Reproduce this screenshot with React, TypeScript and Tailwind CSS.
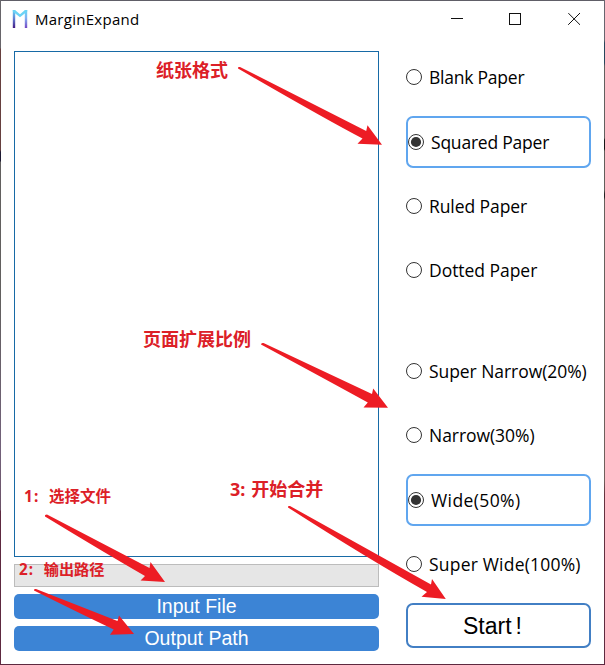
import React from "react";

type Option = { label: string; tracking: string; selected?: boolean };

const paperOptions: Option[] = [
  { label: "Blank Paper", tracking: "tracking-[-0.23px]" },
  { label: "Squared Paper", tracking: "tracking-[-0.22px]", selected: true },
  { label: "Ruled Paper", tracking: "tracking-[-0.08px]" },
  { label: "Dotted Paper", tracking: "tracking-[-0.04px]" },
];

const widthOptions: Option[] = [
  { label: "Super Narrow(20%)", tracking: "tracking-[-0.06px]" },
  { label: "Narrow(30%)", tracking: "tracking-[-0.05px]" },
  { label: "Wide(50%)", tracking: "tracking-[0.4px]", selected: true },
  { label: "Super Wide(100%)", tracking: "tracking-[0.2px]" },
];

function RadioRow({ label, tracking, selected }: Option) {
  return (
    <label
      className={
        selected
          ? "flex h-[52px] w-[185px] items-center rounded-[7px] border-2 border-[#60a6ef]"
          : "flex h-[52px] w-[185px] items-center pb-px"
      }
    >
      <svg className="block h-4 w-4 shrink-0" viewBox="0 0 16 16">
        <circle cx="8" cy="8" r="7.5" fill="white" stroke="#333" strokeWidth="1" />
        {selected && <circle cx="8" cy="8" r="5.1" fill="#333" />}
      </svg>
      <span className={`ml-[7px] whitespace-nowrap text-[17.5px] leading-6 ${tracking}`}>{label}</span>
    </label>
  );
}

function RadioGroup({ options }: { options: Option[] }) {
  return (
    <div className="flex flex-col gap-[12.4px]">
      {options.map((o) => (
        <RadioRow key={o.label} {...o} />
      ))}
    </div>
  );
}

const noteBase =
  "absolute whitespace-nowrap font-['Noto_Sans','Noto_Sans_CJK_SC',sans-serif] font-bold text-[#dc2027]";

export default function App() {
  return (
    <div className="relative flex h-[665px] w-[605px] overflow-hidden bg-white font-['Open_Sans',sans-serif] text-black">
      <div className="w-px bg-[linear-gradient(to_bottom,#67656a_0_48px,#66403f_49px_150px,#1d1a33_152px_161px,#62605f_162px_300px,#72617a_450px,#6b5267_510px,#5d2940_511px)]" />
      <div className="flex flex-1 flex-col border-y border-t-[#605e67] border-b-[#5d2940]">
        <header className="flex h-9 items-center pl-[11px]">
          <svg className="h-[18px] w-4" viewBox="0 0 16 18">
            <defs>
              <linearGradient id="logoRight" x1="0" y1="0" x2="0" y2="1">
                <stop offset="0" stopColor="#68d9f7" />
                <stop offset="0.45" stopColor="#83b0f2" />
                <stop offset="1" stopColor="#7447c4" />
              </linearGradient>
              <linearGradient id="logoLeft" x1="0" y1="0" x2="0" y2="1">
                <stop offset="0" stopColor="#68d9f7" />
                <stop offset="0.5" stopColor="#607bd1" />
                <stop offset="1" stopColor="#421a83" />
              </linearGradient>
            </defs>
            <path d="M0.8 0H3.2V18H0.8Z" fill="url(#logoLeft)" />
            <path d="M12.8 0H15.2V18H12.8Z" fill="url(#logoRight)" />
            <path d="M0.8 0H3L8 4.3L13 0H15.2V1.6L8 7.2L0.8 1.6Z" fill="#6bd3f6" />
          </svg>
          <span className="ml-[7px] text-[15px] leading-5 tracking-[0.27px]">MarginExpand</span>
          <svg className="ml-auto mr-[22px] h-3 w-[132px]" viewBox="0 0 132 12" fill="none" stroke="#111">
            <path d="M1 5.5H13" />
            <rect x="59.5" y="0.5" width="11" height="11" />
            <path d="M118.2 0L130 11.8M130 0L118.2 11.8" />
          </svg>
        </header>
        <main className="flex flex-1 pl-[13px] pt-[14px]">
          <section className="flex w-[365px] flex-col">
            <div className="h-[506px] border border-[#176aa6]" />
            <div className="mt-[7px] h-[23px] border border-[#bcbcbc] bg-[#e6e6e6]" />
            <button className="mt-[7px] flex h-[25px] items-center justify-center rounded-[5px] bg-[#3c84d5] pt-px font-['Liberation_Sans',sans-serif] text-[19.5px] leading-none text-white">
              Input File
            </button>
            <button className="mt-[7px] flex h-[25px] items-center justify-center rounded-[5px] bg-[#3c84d5] pt-px font-['Liberation_Sans',sans-serif] text-[19.5px] leading-none text-white">
              Output Path
            </button>
          </section>
          <section className="ml-[27px] flex w-[185px] flex-col pt-[0.8px]">
            <RadioGroup options={paperOptions} />
            <div className="h-[48.4px]" />
            <RadioGroup options={widthOptions} />
            <button className="mt-[12.4px] flex h-[45px] items-center justify-center rounded-[7px] border-2 border-[#427fc4] pr-3 pt-0.5 font-['Liberation_Sans',sans-serif] text-[23px] leading-none">
              Start<span className="ml-1">!</span>
            </button>
          </section>
        </main>
      </div>
      <div className="w-px bg-[linear-gradient(to_bottom,#67656f_0_40px,#27465c_43px_63px,#62605f_66px_138px,#161616_140px_149px,#625e5b_151px_190px,#222_194px_197px,#66605c_200px_300px,#71605c_480px,#65333f_494px,#5d2940)]" />

      <div className={`${noteBase} left-[156px] top-[58px] text-[18px] leading-6`}>纸张格式</div>
      <div className={`${noteBase} left-[143px] top-[327px] text-[18px] leading-6`}>页面扩展比例</div>
      <div className={`${noteBase} left-[24px] top-[484px] text-[15.5px] leading-6`}>
        1<span className="ml-px inline-block w-[15px]">:</span>选择文件
      </div>
      <div className={`${noteBase} left-[19px] top-[557px] text-[15.2px] leading-6`}>
        2<span className="ml-px inline-block w-[15px]">:</span>输出路径
      </div>
      <div className={`${noteBase} left-[230px] top-[477px] text-[18px] leading-6`}>
        3<span className="inline-block w-[11px]">:</span>开始合并
      </div>
      <svg className="pointer-events-none absolute left-0 top-0 h-[665px] w-[605px]" viewBox="0 0 605 665" fill="#ed1c24">
        <path d="M238 68.5Q237.5 66.5 240 67L366.2 131L367.5 125.2L382 144.8L357.5 143.8L362.5 138.5Q325 119 238 68.5Z" />
        <path d="M261 344.5Q261 342.5 263.5 343L372 394L373.2 388.5L388 407.8L363.5 407.5L367.8 402.5Q325 379 261 344.5Z" />
        <path d="M45 516.5Q44.5 514.5 47 514.5L149.5 568L150.5 562L165 582L140.5 580.5L145 576Q105 553 45 516.5Z" />
        <path d="M34 590.5Q33.5 588.5 36 589L117.5 621L119 615.5L134 634L110 634.8L113.7 629.5Q79 613 34 590.5Z" />
        <path d="M288 507.5Q287.5 505.5 290 506L431 584.5L432 579L445.8 599L421.5 596.8L427 592Q365 557 288 507.5Z" />
      </svg>
    </div>
  );
}
